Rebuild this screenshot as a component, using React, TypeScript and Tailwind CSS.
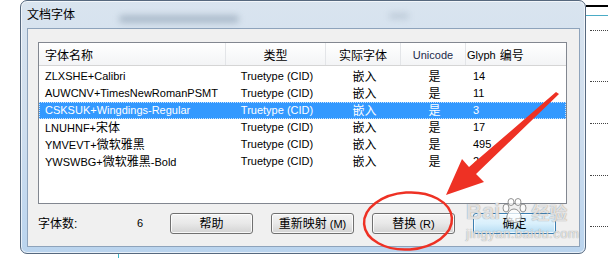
const COLS = [187, 100, 75, 65, 100]

const ROWS = [
  { name: 'ZLXSHE+Calibri', glyph: '14' },
  { name: 'AUWCNV+TimesNewRomanPSMT', glyph: '11' },
  { name: 'CSKSUK+Wingdings-Regular', glyph: '3', selected: true },
  { name: 'LNUHNF+宋体', glyph: '17' },
  { name: 'YMVEVT+微软雅黑', glyph: '495' },
  { name: 'YWSWBG+微软雅黑-Bold', glyph: '24' },
]

// CJK runs are set a little larger than the latin text, like the bitmap font in the dialog
function Mixed({ text }: { text: string }) {
  const parts = text.split(/([\u4e00-\u9fff]+)/)
  return (
    <span>
      {parts.map((p, i) =>
        /[\u4e00-\u9fff]/.test(p) ? (
          <span key={i} className="text-[12px]">
            {p}
          </span>
        ) : (
          <span key={i}>{p}</span>
        ),
      )}
    </span>
  )
}

function Button({ label, primary }: { label: string; primary?: boolean }) {
  return (
    <div
      className={`flex h-[21px] w-[83px] items-center justify-center rounded-[3px] border text-[11px] leading-none shadow-[inset_0_0_0_1px_rgba(255,255,255,0.8)] ${
        primary
          ? 'border-[#3c7fb1] bg-gradient-to-b from-[#eaf6fd] via-[#d9f0fc] to-[#b6dcf3]'
          : 'border-[#707070] bg-gradient-to-b from-[#f4f4f4] via-[#e8e8e8] to-[#d3d3d3]'
      }`}
    >
      <Mixed text={label} />
    </div>
  )
}

function FontList() {
  return (
    <div className="flex h-[162px] w-[529px] flex-col border border-[#828790] bg-white">
      {/* header */}
      <div className="flex h-[23px] border-b border-[#d5d5d5] bg-gradient-to-b from-white to-[#f3f4f6] text-[12px] leading-none">
        <div className="flex items-center border-r border-[#e3e5e8] pl-[6px] pt-[3px]" style={{ width: COLS[0] }}>
          字体名称
        </div>
        <div className="flex items-center justify-center border-r border-[#e3e5e8] pt-[3px]" style={{ width: COLS[1] }}>
          类型
        </div>
        <div className="flex items-center justify-center border-r border-[#e3e5e8] pt-[3px]" style={{ width: COLS[2] }}>
          实际字体
        </div>
        <div className="flex items-center justify-center border-r border-[#e3e5e8] pt-[3px] text-[11px] text-[#1c2a4a]" style={{ width: COLS[3] }}>
          Unicode
        </div>
        <div className="flex items-center pl-[1px] pt-[3px]" style={{ width: COLS[4] }}>
          <span className="text-[11px]">Glyph</span>
          <span className="ml-[4px]">编号</span>
        </div>
      </div>

      {/* rows */}
      <div className="flex flex-col pt-[2px] text-[11px] leading-none">
        {ROWS.map((r) => (
          <div
            key={r.name}
            className={`flex h-[17px] items-center ${
              r.selected ? 'border border-dotted border-[#c9e2fb] bg-[#3399ff] text-white' : 'border border-transparent'
            }`}
          >
            <div className="pl-[5px]" style={{ width: COLS[0] }}>
              <Mixed text={r.name} />
            </div>
            <div className="text-center" style={{ width: COLS[1] }}>
              Truetype (CID)
            </div>
            <div className="text-center text-[12px]" style={{ width: COLS[2] }}>
              嵌入
            </div>
            <div className="text-center text-[12px]" style={{ width: COLS[3] }}>
              是
            </div>
            <div className="pl-[6px]" style={{ width: COLS[4] - 2 }}>
              {r.glyph}
            </div>
          </div>
        ))}
      </div>
    </div>
  )
}

function Window() {
  return (
    <div className="flex h-[254px] w-[566px] shrink-0 flex-col rounded-[7px] border border-[#56687e] bg-gradient-to-b from-[#d9e4ef] via-[#cfdeee] to-[#bad4ee] shadow-[inset_0_0_0_1px_rgba(255,255,255,0.65)]">
      {/* title bar */}
      <div className="flex h-[27px] items-center pl-[6px]">
        <span className="text-[12px] leading-none">文档字体</span>
        <div className="ml-[44px] mt-[9px] h-[8px] w-[120px] rounded bg-[#6f8299]/40 blur-[3px]" />
        <div className="ml-[150px] mt-[2px] h-[6px] w-[20px] rounded bg-[#6f8299]/25 blur-[3px]" />
      </div>

      {/* client area */}
      <div className="ml-[6px] flex h-[219px] w-[553px] flex-col border border-[#8ea3bb] bg-[#f0f0f0] pl-[10px] pt-[13px]">
        <FontList />
        <div className="mt-[9px] flex h-[21px] items-center leading-none">
          <div className="w-[99px] text-[12px]">字体数:</div>
          <div className="w-[33px] text-[11px]">6</div>
          <div className="flex gap-[18px]">
            <Button label="帮助" />
            <Button label="重新映射 (M)" />
            <Button label="替换 (R)" />
            <Button label="确定" primary />
          </div>
        </div>
      </div>
    </div>
  )
}

function RightStrip() {
  return (
    <div className="flex w-[22px] shrink-0 flex-col">
      <div className="mt-[5px] h-[2px] bg-black" />
      <div className="mt-[8px] h-px bg-[#4bacc6]" />
      <div className="ml-[4px] mt-[14px] border-t border-dotted border-[#444]" />
      <div className="ml-[4px] mt-[50px] border-t border-dotted border-[#444]" />
      <div className="ml-[4px] mt-[41px] border-t border-dotted border-[#444]" />
      <div className="ml-[4px] mt-[51px] border-t border-dotted border-[#444]" />
      <div className="ml-[4px] mt-[50px] border-t border-dotted border-[#444]" />
    </div>
  )
}

function Watermark() {
  return (
    <div className="pointer-events-none absolute left-[466px] top-[198px] flex flex-col text-white/75 [text-shadow:0_0_1px_rgba(110,110,110,0.9)]">
      <div className="flex items-end leading-none">
        <span className="text-[22px] font-bold">Bai</span>
        <svg width="28" height="26" viewBox="0 0 28 26" className="mb-[-1px]">
          <g fill="rgba(255,255,255,0.75)" stroke="rgba(120,120,120,0.8)" strokeWidth="1">
            <ellipse cx="6" cy="10" rx="3" ry="4" />
            <ellipse cx="11" cy="4" rx="3" ry="3.5" />
            <ellipse cx="18" cy="4" rx="3" ry="3.5" />
            <ellipse cx="23" cy="10" rx="3" ry="4" />
            <path d="M14 11 C8 11 5 20 8 23 C11 25 17 25 20 23 C23 20 20 11 14 11 Z" />
          </g>
        </svg>
        <span className="ml-[3px] text-[18px] font-bold">经验</span>
      </div>
      <span className="mt-[4px] text-[13px] leading-none tracking-[0.5px]">jingyan.baidu.com</span>
    </div>
  )
}

function Annotations() {
  return (
    <svg className="pointer-events-none absolute left-0 top-0" width="608" height="258" viewBox="0 0 608 258">
      <polygon points="556,92 559,94 476,174 484,182 446,195 462,159 469,167" fill="#ee3124" />
      <ellipse
        cx="408"
        cy="221"
        rx="44"
        ry="28.5"
        fill="none"
        stroke="#ee3124"
        strokeWidth="2.5"
        transform="rotate(-4 408 221)"
      />
    </svg>
  )
}

export default function App() {
  return (
    <div className="relative h-[258px] w-[608px] overflow-hidden bg-white text-black [font-family:'Liberation_Sans','Noto_Sans_CJK_SC',sans-serif]">
      <div className="flex h-[254px]">
        <div className="w-[20px] shrink-0" />
        <Window />
        <RightStrip />
      </div>
      <div className="flex h-[4px]">
        <div className="ml-[118px] w-px bg-[#3fb6c8]" />
      </div>
      <Watermark />
      <Annotations />
    </div>
  )
}
